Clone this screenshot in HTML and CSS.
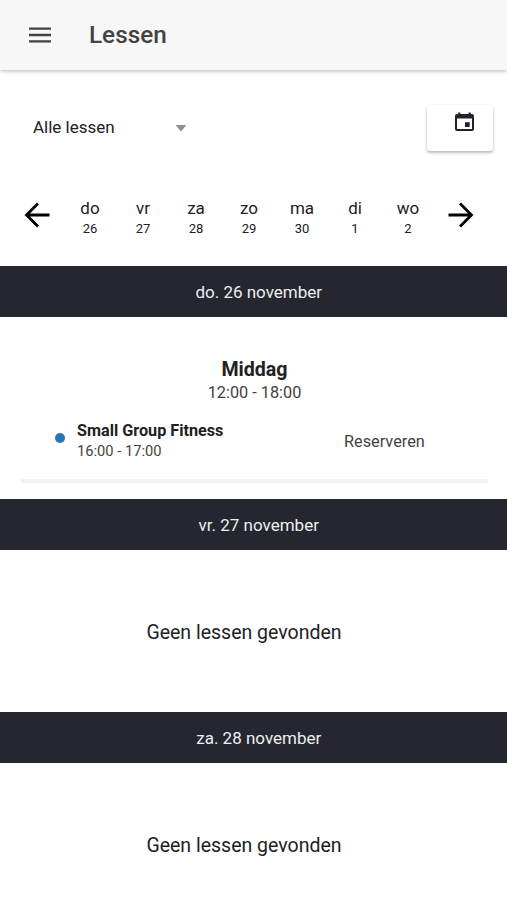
FILE: index.html
```html
<!DOCTYPE html>
<html lang="nl">
<head>
<meta charset="UTF-8">
<meta name="viewport" content="width=device-width, initial-scale=1.0">
<title>Lessen</title>
<link rel="stylesheet" href="styles.css">
</head>
<body>

<header class="toolbar">
    <svg class="menu-icon" width="22" height="16" viewBox="0 0 22 16">
        <path d="M0 1.6h22M0 8h22M0 14.4h22" stroke="#424242" stroke-width="2.4"/>
    </svg>
    <h1>Lessen</h1>
</header>

<div class="filters">
    <div class="select">
        <span>Alle lessen</span>
        <svg class="caret" width="12" height="7" viewBox="0 0 12 7"><path d="M0.500 0h11L6 6.500z" fill="#8f8f8f"/></svg>
    </div>
    <button class="calendar">
        <svg width="19" height="20" viewBox="0 0 19 20">
            <path fill="#212329" fill-rule="evenodd" d="M3.2 0.500h2.200v1.500h8.200V0.500h2.200v1.500H17a2 2 0 0 1 2 2v13a2 2 0 0 1-2 2H2a2 2 0 0 1-2-2V4a2 2 0 0 1 2-2h1.200zM2 6.500V17h15V6.500zM10 10.300h4.700V15H10z"/>
        </svg>
    </button>
</div>

<nav class="week">
    <svg class="arrow" width="26" height="26" viewBox="0 0 26 26"><path d="M25.500 13H2.500M14 1.500L2.500 13 14 24.500"/></svg>
    <div class="days">
        <div class="day">do<small>26</small></div>
        <div class="day">vr<small>27</small></div>
        <div class="day">za<small>28</small></div>
        <div class="day">zo<small>29</small></div>
        <div class="day">ma<small>30</small></div>
        <div class="day">di<small>1</small></div>
        <div class="day">wo<small>2</small></div>
    </div>
    <svg class="arrow" width="26" height="26" viewBox="0 0 26 26"><path d="M0.500 13h22.500M12 1.500L23.500 13 12 24.500"/></svg>
</nav>

<h2 class="date">do. 26 november</h2>
<section class="lessons">
    <h3>Middag</h3>
    <p class="period">12:00 - 18:00</p>
    <div class="lesson">
        <span class="dot"></span>
        <div class="info">
            <strong>Small Group Fitness</strong>
            <span class="time">16:00 - 17:00</span>
        </div>
        <span class="reserve">Reserveren</span>
    </div>
</section>

<h2 class="date">vr. 27 november</h2>
<p class="empty">Geen lessen gevonden</p>

<h2 class="date">za. 28 november</h2>
<p class="empty">Geen lessen gevonden</p>

</body>
</html>
```
FILE: styles.css
```css
* {
    box-sizing: border-box;
}

body {
    margin: 0;
    height: 900px;
    overflow: hidden;
    background-color: #fff;
    color: #212121;
    font-family: Roboto, sans-serif;
}

h1, h2, h3, p {
    margin: 0;
}

.toolbar {
    display: flex;
    align-items: center;
    height: 70px;
    padding-left: 29px;
    background-color: #f7f7f7;
    box-shadow: 0 1px 4px rgba(0, 0, 0, 0.3);
}

.toolbar h1 {
    margin-left: 38px;
    font-size: 24.3px;
    font-weight: 500;
    line-height: 28px;
    color: #424242;
}

.filters {
    display: flex;
    justify-content: space-between;
    padding: 35px 14px 0 33px;
}

.select {
    display: flex;
    align-items: center;
    justify-content: space-between;
    width: 154px;
    height: 44px;
    font-size: 17px;
}

.caret {
    margin-top: 3px;
}

.calendar {
    display: flex;
    justify-content: center;
    width: 66px;
    height: 46px;
    padding: 7px 0 0 8px;
    background-color: #fff;
    border: none;
    border-radius: 3px;
    box-shadow: 0 2px 3px rgba(0, 0, 0, 0.25), 0 0 3px rgba(0, 0, 0, 0.08);
}

.week {
    display: flex;
    align-items: center;
    height: 115px;
    padding: 13px 33px 0 24px;
}

.arrow {
    fill: none;
    stroke: #000;
    stroke-width: 2.8;
}

.days {
    display: flex;
    flex: 1;
    padding: 4px 13.500px 0 13.500px;
}

.day {
    flex: 1;
    font-size: 17px;
    line-height: 22px;
    text-align: center;
}

.day small {
    display: block;
    font-size: 13px;
    line-height: 19px;
}

.date {
    height: 51px;
    padding-left: 10.5px;
    background-color: #242730;
    color: #eee;
    font-size: 17px;
    font-weight: 400;
    line-height: 52px;
    text-align: center;
}

.lessons {
    height: 182.4px;
    padding: 40px 19px 0 21px;
    text-align: center;
}

.lessons h3 {
    font-size: 19.6px;
    font-weight: 700;
    line-height: 26px;
}

.period {
    font-size: 16.3px;
    line-height: 20px;
    color: #424242;
}

.lesson {
    display: flex;
    height: 80px;
    padding: 18px 0 0 34px;
    border-bottom: 4px solid #f3f3f5;
    text-align: left;
}

.dot {
    width: 10px;
    height: 10px;
    margin-top: 12px;
    background-color: #2a72ba;
    border-radius: 50%;
}

.info {
    width: 267px;
    margin-left: 12px;
    font-size: 16.2px;
    line-height: 20px;
}

.time {
    display: block;
    font-size: 14.7px;
    color: #424242;
}

.reserve {
    font-size: 16.3px;
    line-height: 42px;
    color: #424242;
}

.empty {
    height: 161.6px;
    padding-right: 19px;
    font-size: 19.5px;
    line-height: 165px;
    text-align: center;
}
```
